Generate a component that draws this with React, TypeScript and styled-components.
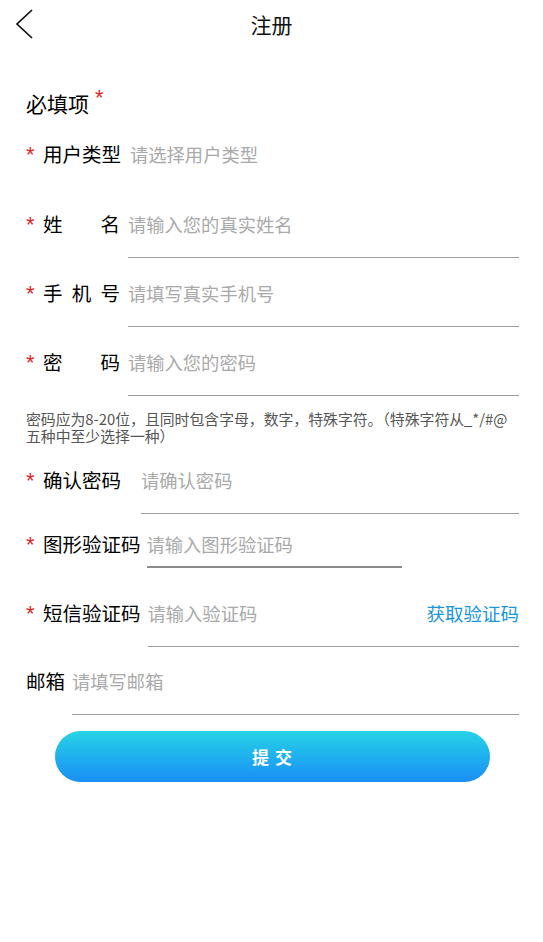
import React from "react";
import styled, { createGlobalStyle } from "styled-components";

const GlobalStyle = createGlobalStyle`
  html, body {
    margin: 0;
    padding: 0;
    background: #ffffff;
  }
  body {
    font-family: "Noto Sans CJK SC", "Noto Sans", sans-serif;
    color: #111111;
  }
`;

type FieldDef = {
  label: string[];
  spread?: boolean;
  required?: boolean;
  placeholder: string;
  top: number;
  gap: number;
  underline?: "none" | "thin" | "short";
  action?: string;
};

const fields: FieldDef[] = [
  { label: ["用户类型"], required: true, placeholder: "请选择用户类型", top: 24, gap: 9, underline: "none" },
  { label: ["姓", "名"], spread: true, required: true, placeholder: "请输入您的真实姓名", top: 24, gap: 8 },
  { label: ["手", "机", "号"], spread: true, required: true, placeholder: "请填写真实手机号", top: 23, gap: 8 },
  { label: ["密", "码"], spread: true, required: true, placeholder: "请输入您的密码", top: 23, gap: 8 },
];

const fields2: FieldDef[] = [
  { label: ["确认密码"], required: true, placeholder: "请确认密码", top: 24, gap: 20 },
  { label: ["图形验证码"], required: true, placeholder: "请输入图形验证码", top: 18, gap: 6, underline: "short" },
  { label: ["短信验证码"], required: true, placeholder: "请输入验证码", top: 33, gap: 7, action: "获取验证码" },
  { label: ["邮箱"], placeholder: "请填写邮箱", top: 22, gap: 7 },
];

const FormField = ({ f }: { f: FieldDef }) => (
  <Field $top={f.top}>
    {f.required && <Star>*</Star>}
    <Label $spread={f.spread}>
      {f.label.map((c) => (
        <span key={c}>{c}</span>
      ))}
    </Label>
    <InputLine $gap={f.gap} $underline={f.underline || "thin"}>
      <Placeholder>{f.placeholder}</Placeholder>
      {f.action && <Action>{f.action}</Action>}
    </InputLine>
  </Field>
);

const App = () => {
  return (
    <Page>
      <GlobalStyle />
      <Header>
        <Back>
          <svg width="18" height="32" viewBox="0 0 18 32">
            <polyline points="16,1 1,15 16,29" fill="none" stroke="#111" strokeWidth="1.7" />
          </svg>
        </Back>
        <Title>注册</Title>
      </Header>

      <SectionTitle>
        必填项<sup>*</sup>
      </SectionTitle>

      {fields.map((f) => (
        <FormField key={f.placeholder} f={f} />
      ))}

      <Hint>
        密码应为8-20位，且同时包含字母，数字，特殊字符。（特殊字符从_*/#@
        <br />
        五种中至少选择一种）
      </Hint>

      {fields2.map((f) => (
        <FormField key={f.placeholder} f={f} />
      ))}

      <Submit>提 交</Submit>
    </Page>
  );
};

export default App;

const Page = styled.div`
  width: 543px;
  min-height: 942px;
  background: #fff;
  display: flex;
  flex-direction: column;
`;

const Header = styled.div`
  position: relative;
  height: 48px;
  display: flex;
  justify-content: center;
  align-items: center;
`;

const Back = styled.div`
  position: absolute;
  left: 16px;
  top: 9px;
  width: 18px;
  height: 32px;
`;

const Title = styled.div`
  font-size: 21px;
  color: #111;
  line-height: 48px;
`;

const SectionTitle = styled.div`
  margin: 40px 0 0 26px;
  font-size: 21px;
  line-height: 30px;
  color: #000;

  sup {
    color: #e0262b;
    font-family: "Liberation Sans", sans-serif;
    font-size: 22px;
    line-height: 0;
    vertical-align: 0;
    position: relative;
    top: -7px;
    margin-left: 6px;
  }
`;

const Field = styled.div<{ $top: number }>`
  display: flex;
  align-items: flex-start;
  margin-top: ${(p) => p.$top}px;
  padding: 0 24px 0 26px;
`;

const Star = styled.span`
  width: 17px;
  flex: none;
  color: #e0262b;
  font-family: "Liberation Sans", sans-serif;
  font-size: 22px;
  line-height: 24px;
  position: relative;
  top: 1px;
`;

const Label = styled.div<{ $spread?: boolean }>`
  flex: none;
  display: flex;
  justify-content: space-between;
  width: ${(p) => (p.$spread ? "77px" : "auto")};
  font-size: 19.5px;
  line-height: 24px;
  color: #000;
`;

const InputLine = styled.div<{ $gap: number; $underline: "none" | "thin" | "short" }>`
  margin-left: ${(p) => p.$gap}px;
  display: flex;
  justify-content: space-between;
  align-items: flex-start;
  flex: ${(p) => (p.$underline === "short" ? "none" : "1")};
  width: ${(p) => (p.$underline === "short" ? "255px" : "auto")};
  height: ${(p) => (p.$underline === "short" ? "34px" : "45px")};
  border-bottom: ${(p) =>
    p.$underline === "none"
      ? "1px solid transparent"
      : p.$underline === "short"
      ? "2px solid #8a8a8a"
      : "1px solid #9c9c9c"};
`;

const Placeholder = styled.span`
  font-size: 18.3px;
  line-height: 24px;
  color: #a9a9a9;
`;

const Action = styled.span`
  font-size: 18.5px;
  line-height: 24px;
  color: #1a95de;
`;

const Hint = styled.p`
  margin: 14px 24px 0 26px;
  font-size: 14.85px;
  line-height: 17px;
  color: #555;
  white-space: nowrap;
`;

const Submit = styled.button`
  align-self: center;
  margin: 16px 0 0 2px;
  width: 435px;
  height: 51px;
  border: none;
  border-radius: 26px;
  background: linear-gradient(180deg, #27d3e6 0%, #1fb0ee 50%, #1a8ef6 100%);
  color: #fff;
  font-family: "Noto Sans CJK SC", sans-serif;
  font-size: 17px;
  font-weight: 700;
  letter-spacing: 1px;
  cursor: pointer;
`;
